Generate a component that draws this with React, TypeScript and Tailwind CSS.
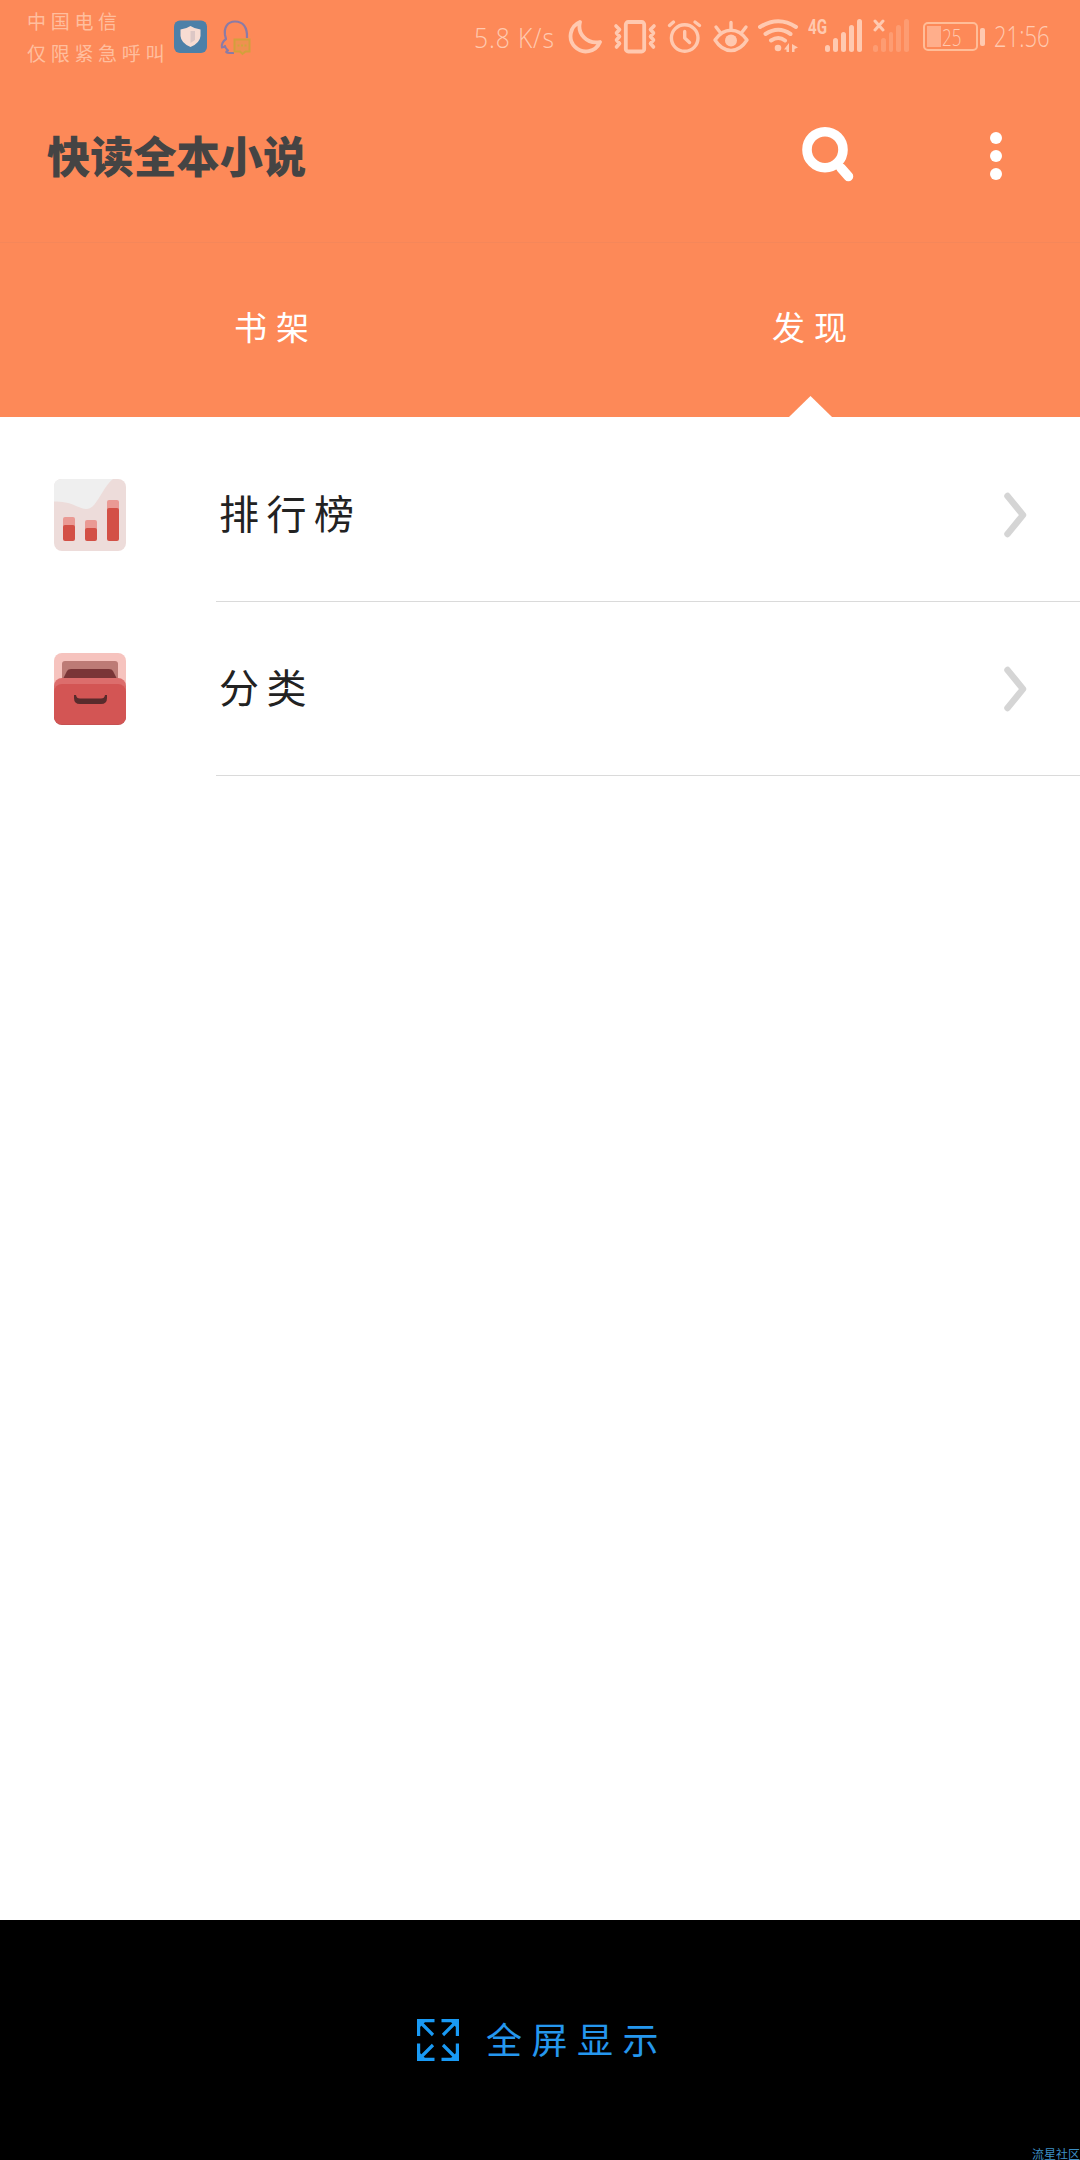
import React from "react";

const tint = "#ffc9b0";

function CarrierLabels() {
  return (
    <div className="ml-[27px] flex w-[147px] shrink-0 flex-col whitespace-nowrap font-['Noto_Sans_CJK_SC',sans-serif] text-[19px] font-normal leading-[32px] tracking-[4.700px] text-[#ffbe9e]">
      <span>中国电信</span>
      <span>仅限紧急呼叫</span>
    </div>
  );
}

function ShieldIcon() {
  return (
    <svg className="shrink-0" width="34" height="34" viewBox="174 20 34 34">
      <rect x="174" y="20.5" width="33" height="32.5" rx="6" fill="#4c80a8" />
      <path d="M190.500 26 Q195 29 200.500 29.500 V36 Q200 43 190.500 47 Q181 43 180.500 36 V29.500 Q186 29 190.500 26Z" fill="#f7dcd2" />
      <path d="M190.500 31 H195 V40 L190.500 43Z" fill="#dcc7c5" />
    </svg>
  );
}

function HeadIcon() {
  return (
    <svg className="ml-3 shrink-0" width="34" height="36" viewBox="220 19 34 36" fill="none">
      <path d="M247 37 C247.500 26 243 20.500 235 20.500 C227 20.500 224 27 225 34 L226 38 C223 40 221 44 222 46.500 C223.500 46.500 225 45 225 45 C225 47 227 48.500 228 49.500 C225 51 226 52 230 52 H234" stroke="#8a7ba6" strokeWidth="2.200" strokeLinejoin="round" />
      <path d="M234.500 38.500 H249.500 V50.500 H245.500 L242.500 53 L240 50.500 H234.500Z" stroke="#d2a03c" strokeWidth="2" fill="#ee9150" />
      <path d="M237.500 44.500 H247" stroke="#cfa63c" strokeWidth="2" strokeDasharray="2 1.500" />
    </svg>
  );
}

function StatusIcons() {
  return (
    <>
      <svg className="shrink-0" width="36" height="36" viewBox="568 18 36 36" fill="none">
        <path d="M580 22 A15.300 15.300 0 1 0 600 42 C587 44.500 577 34 580 22Z" stroke={tint} strokeWidth="3.800" strokeLinejoin="round" />
      </svg>
      <svg className="ml-[7px] shrink-0" width="46" height="36" viewBox="611 18 46 36" fill="none" stroke={tint} strokeWidth="3.800" strokeLinejoin="round" strokeLinecap="round">
        <rect x="625.800" y="22" width="18.400" height="29.500" rx="2.500" />
        <path strokeWidth="3.600" d="M616 26 L619.500 29.500 L616.500 33 L619.500 36.500 L616.500 40 L619.500 43.500 L616.500 47 M654 26 L650.500 29.500 L653.500 33 L650.500 36.500 L653.500 40 L650.500 43.500 L653.500 47" />
      </svg>
      <svg className="ml-[9px] shrink-0" width="38" height="36" viewBox="666 18 38 36" fill="none" stroke={tint} strokeWidth="3.400" strokeLinecap="round" strokeLinejoin="round">
        <circle cx="684.700" cy="38" r="13.300" />
        <path d="M684.700 31.500 V38 L689.500 42.500 M669.500 25.500 L673.500 22 M695 22 L699.500 25.500" />
      </svg>
      <svg className="ml-[7px] shrink-0" width="40" height="36" viewBox="711 18 40 36" fill="none" stroke={tint} strokeWidth="3.400" strokeLinecap="round">
        <path d="M715 40 C724 27 738 27 747 40 C738 54 724 54 715 40Z" strokeLinejoin="round" />
        <circle cx="731" cy="40.500" r="6" fill={tint} stroke="none" />
        <path d="M731 22.500 V30 M716 27 L719.500 31.500 M746 27 L742.500 31.500" />
      </svg>
      <svg className="ml-[7px] shrink-0" width="42" height="36" viewBox="758 18 42 36" fill="none" stroke={tint} strokeWidth="4" strokeLinecap="round">
        <path d="M760 27 Q778.500 15.500 796 27 M765.500 34 Q778.500 25.500 790.500 34 M771 40.500 Q778.500 35.500 785 40.500" />
        <circle cx="778" cy="48" r="3.300" fill={tint} stroke="none" />
        <path d="M789 43 V52 H786.500 V49.500 H784 L789 43Z M792 44 L798 47.500 L794.500 49 V52 H792Z" fill={tint} stroke="none" />
      </svg>
    </>
  );
}

function Bars({ faint }: { faint?: boolean }) {
  return (
    <div className={faint ? "flex h-[33px] items-end gap-[3px] opacity-30" : "flex h-[33px] items-end gap-[3px]"}>
      <i className="h-[7px] w-[5px] rounded-full bg-[#ffc9b0]" />
      <i className="h-[14px] w-[5px] rounded-full bg-[#ffc9b0]" />
      <i className="h-[20px] w-[5px] rounded-full bg-[#ffc9b0]" />
      <i className="h-[27px] w-[5px] rounded-full bg-[#ffc9b0]" />
      <i className="h-[33px] w-[5px] rounded-full bg-[#ffc9b0]" />
    </div>
  );
}

function StatusBar() {
  return (
    <div className="flex h-[80px] items-start">
      <div className="pt-[5px]">
        <CarrierLabels />
      </div>
      <div className="flex w-[300px] shrink-0 pt-5">
        <ShieldIcon />
        <HeadIcon />
      </div>
      <span className="mt-[19px] w-[94px] shrink-0 origin-left scale-x-[0.880] whitespace-nowrap font-['Open_Sans',sans-serif] text-[28px] font-light leading-[36px] tracking-[1px] text-[#ffc9b0]">5.8 K/s</span>
      <div className="flex shrink-0 pt-[18px]">
        <StatusIcons />
      </div>
      <div className="ml-2 mt-[19px] flex w-[55px] shrink-0">
        <span className="w-[17px] origin-left scale-x-[0.760] font-['Roboto',sans-serif] text-[20px] font-bold leading-[16px] text-[#ffc9b0]">4G</span>
        <Bars />
      </div>
      <div className="relative ml-[10px] mt-[19px] w-[36px] shrink-0">
        <Bars faint />
        <svg className="absolute left-0 top-0" width="12" height="13" viewBox="0 0 12 13">
          <path d="M2 2 L10 11 M10 2 L2 11" stroke={tint} strokeWidth="3" strokeLinecap="round" />
        </svg>
      </div>
      <div className="ml-[14px] mt-[22px] flex h-[29px] w-[55px] shrink-0 items-center rounded-[5px] border-2 border-[#ffbd98] pl-[2px]">
        <i className="h-[21px] w-[14px] shrink-0 bg-[#ffae8b]" />
        <span className="ml-px origin-left scale-x-[0.740] font-['Open_Sans',sans-serif] text-[23px] font-light leading-[24px] text-[#ffc9b0]">25</span>
      </div>
      <i className="ml-[2px] mt-[28px] h-[18px] w-[5px] shrink-0 rounded-[2px] bg-[#ffc9b0]" />
      <span className="ml-[9px] mt-[18px] w-[60px] origin-left scale-x-[0.760] whitespace-nowrap font-['Open_Sans',sans-serif] text-[29px] font-light leading-[36px] text-[#ffc9b0]">21:56</span>
    </div>
  );
}

function TitleBar() {
  return (
    <div className="flex h-[162px] items-start">
      <h1 className="ml-[47px] mt-[44px] w-[755px] shrink-0 whitespace-nowrap font-['Noto_Sans_CJK_SC',sans-serif] text-[43.200px] font-black leading-[60px] text-[#444444]">快读全本小说</h1>
      <svg className="mt-[46px] shrink-0" width="54" height="58" viewBox="802 126 54 58">
        <circle cx="825" cy="149.700" r="18" fill="none" stroke="white" strokeWidth="9.600" />
        <path d="M834.500 161 L849.500 177.500" stroke="white" strokeWidth="8" />
        <path d="M841 168 L848.500 176.500" stroke="white" strokeWidth="9.500" strokeLinecap="round" />
      </svg>
      <div className="ml-[134px] mt-[52px] flex flex-col gap-[6px]">
        <i className="size-3 rounded-full bg-white" />
        <i className="size-3 rounded-full bg-white" />
        <i className="size-3 rounded-full bg-white" />
      </div>
    </div>
  );
}

function RankingIcon() {
  return (
    <svg width="72" height="72" viewBox="0 0 72 72">
      <rect width="72" height="72" rx="8" fill="#eddcda" />
      <path d="M8 0 H59 C52 5 46 19 40 26 C35 32 29 30 22 27 C15 23 8 23 0 22.500 V8 Q0 0 8 0Z" fill="#efefef" />
      <rect x="9" y="38" width="12" height="12" rx="2" fill="#ea9a94" />
      <rect x="31" y="41" width="12" height="12" rx="2" fill="#ea9a94" />
      <rect x="53" y="21" width="12" height="12" rx="2" fill="#ea9a94" />
      <rect x="9" y="46" width="12" height="16" rx="2" fill="#d35046" />
      <rect x="31" y="49" width="12" height="13" rx="2" fill="#d35046" />
      <rect x="53" y="29" width="12" height="33" rx="2" fill="#d35046" />
    </svg>
  );
}

function CategoryIcon() {
  return (
    <svg width="72" height="72" viewBox="0 0 72 72">
      <rect width="72" height="50" rx="8" fill="#f6c3be" />
      <path d="M8 28 V11 Q8 8 11 8 H61 Q64 8 64 11 V28Z" fill="#bd7b76" />
      <path d="M9 26 L13 18 Q14 16 17 16 H55 Q58 16 59 18 L63 26Z" fill="#7a3537" />
      <rect y="25" width="72" height="46" rx="8" fill="#dc6d6c" />
      <rect y="34" width="72" height="38" rx="8" fill="#b94f50" />
      <rect y="31" width="72" height="40.500" rx="8" fill="#d35554" />
      <path d="M20 42 H22 Q22.500 45.500 26 45.500 H47 Q50.500 45.500 51 42 H53 V45 Q53 51 47 51 H26 Q20 51 20 45Z" fill="#592b2c" />
    </svg>
  );
}

function ListRow({ icon, label }: { icon: React.ReactNode; label: string }) {
  return (
    <div className="flex h-[174px] pl-[54px]">
      <div className="flex w-[162px] shrink-0 items-center">{icon}</div>
      <div className="flex flex-1 items-center border-b border-[#dadada] pr-[53px] text-[40px] leading-none text-[#222222]">
        <span className="ml-[3px] flex-1 pb-[5px] font-['Noto_Sans_CJK_SC',sans-serif] font-normal tracking-[7.500px]">{label}</span>
        <svg width="24" height="46" viewBox="0 0 24 46">
          <path d="M4.500 4 L20 23 L4.500 42" fill="none" stroke="#d5d5d5" strokeWidth="6.500" strokeLinecap="round" strokeLinejoin="round" />
        </svg>
      </div>
    </div>
  );
}

function FullscreenIcon() {
  return (
    <svg width="42" height="42" viewBox="0 0 42 42" fill="none" stroke="#199af5" strokeWidth="3.200">
      <path d="M17.500 1.600 H1.600 V17 M2 2 L16 16 M24.500 1.600 H40.400 V17 M40 2 L26 16 M1.600 24.500 V40.400 H17.500 M2 40 L16 26 M40.400 24.500 V40.400 H24.500 M40 40 L26 26" />
      <path d="M2 2 H9 L2 9Z M40 2 H33 L40 9Z M2 40 H9 L2 33Z M40 40 H33 L40 33Z" fill="#199af5" stroke="none" />
    </svg>
  );
}

export default function App() {
  return (
    <main className="flex h-[2160px] w-[1080px] flex-col overflow-hidden bg-white">
      <header className="h-[417px] shrink-0 bg-[#fd8958]">
        <StatusBar />
        <TitleBar />
        <nav className="relative flex h-[175px] border-t border-[#f5875a] pt-[61px] font-['Noto_Sans_CJK_SC',sans-serif] text-[33px] font-normal leading-[44px] tracking-[9px] text-white">
          <span className="w-1/2 pl-[234px]">书架</span>
          <span className="w-1/2 pl-[232px]">发现</span>
          <svg className="absolute bottom-0 left-[789px]" width="43" height="21" viewBox="0 0 43 21">
            <path d="M0 21 L21.500 0 L43 21Z" fill="white" />
          </svg>
        </nav>
      </header>
      <section className="flex-1 pt-[11px]">
        <ListRow icon={<RankingIcon />} label="排行榜" />
        <ListRow icon={<CategoryIcon />} label="分类" />
      </section>
      <footer className="relative h-[240px] shrink-0 bg-black">
        <div className="flex items-center pl-[417px] pt-[92px] text-[#2597ee]">
          <FullscreenIcon />
          <span className="ml-[27px] whitespace-nowrap pb-1 font-['Noto_Sans_CJK_SC',sans-serif] text-[36px] font-normal leading-[52px] tracking-[9.500px]">全屏显示</span>
        </div>
        <span className="absolute bottom-0 right-0 whitespace-nowrap font-['Noto_Sans_CJK_SC',sans-serif] text-[12px] leading-[13px] text-[#3d8fc4]">流星社区</span>
      </footer>
    </main>
  );
}
